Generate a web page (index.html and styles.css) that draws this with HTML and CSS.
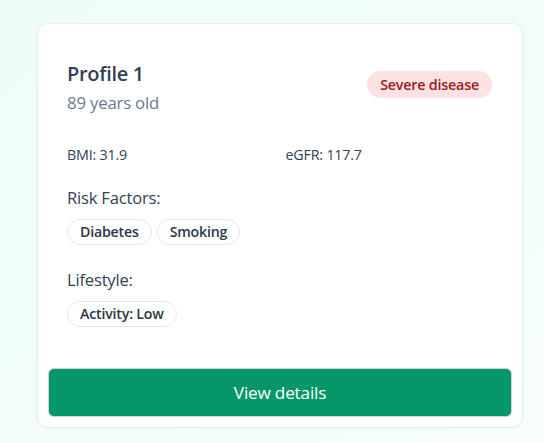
FILE: index.html
```html
<!DOCTYPE html>
<html lang="en">
<head>
<meta charset="utf-8">
<title>Profile 1</title>
<link rel="stylesheet" href="styles.css">
</head>
<body>
<main class="page">
  <article class="card">
    <div class="card-body">
      <header class="card-head">
        <div>
          <h2 class="title">Profile 1</h2>
          <p class="age">89 years old</p>
        </div>
        <span class="badge">Severe disease</span>
      </header>
      <div class="stats">
        <span>BMI: 31.9</span>
        <span>eGFR: 117.7</span>
      </div>
      <section class="group">
        <h3 class="label">Risk Factors:</h3>
        <div class="tags">
          <span class="tag">Diabetes</span>
          <span class="tag">Smoking</span>
        </div>
      </section>
      <section class="group">
        <h3 class="label">Lifestyle:</h3>
        <div class="tags">
          <span class="tag">Activity: Low</span>
        </div>
      </section>
    </div>
    <button class="btn" type="button">View details</button>
  </article>
</main>
</body>
</html>
```
FILE: styles.css
```css
* { box-sizing: border-box; }
html, body { margin: 0; height: 100%; }
body {
  font-family: "Open Sans", "Noto Sans", sans-serif;
  background: linear-gradient(135deg, #f0fdf6 0%, #f3fdf8 60%, #f7fefb 100%);
  color: #334155;
}
.page {
  padding: 23px 21px 0 37px;
}
.card {
  width: 486px;
  background: #ffffff;
  border: 1px solid #d5f7e6;
  border-radius: 10px;
  padding: 10px;
}
.card-body {
  padding: 26px 20px 41px 19px;
}
.card-head {
  display: flex;
  justify-content: space-between;
  align-items: flex-start;
}
.title {
  margin: 0;
  font-size: 20px;
  font-weight: 600;
  line-height: 28px;
  color: #334155;
  letter-spacing: -0.3px;
}
.age {
  margin: 3px 0 0;
  font-size: 16.8px;
  line-height: 24px;
  color: #6b7a90;
  letter-spacing: -0.2px;
}
.badge {
  margin-top: 11px;
  background: #fee2e2;
  color: #991b1b;
  font-size: 14.3px;
  font-weight: 600;
  line-height: 27px;
  padding: 0 13px;
  border-radius: 999px;
  letter-spacing: -0.2px;
}
.stats {
  display: grid;
  grid-template-columns: 1fr 1fr;
  column-gap: 12px;
  margin-top: 30px;
  font-size: 14.3px;
  line-height: 20px;
  color: #334155;
  letter-spacing: -0.2px;
}
.group { margin-top: 21px; }
.group + .group { margin-top: 23px; }
.label {
  margin: 0;
  font-size: 16.6px;
  font-weight: 400;
  line-height: 24px;
  color: #334155;
  letter-spacing: -0.2px;
}
.tags {
  display: flex;
  gap: 5px;
  margin-top: 9px;
}
.tag {
  border: 1px solid #e2e8f0;
  border-radius: 999px;
  padding: 0 12px;
  font-size: 14.2px;
  font-weight: 600;
  line-height: 24px;
  color: #2d3748;
  letter-spacing: -0.2px;
}
.btn {
  display: block;
  width: 100%;
  height: 49px;
  border: 1px solid #d1d5db;
  border-radius: 6px;
  background: #059669;
  color: #ffffff;
  font-family: inherit;
  font-size: 17.2px;
  letter-spacing: -0.2px;
  cursor: pointer;
}
```
